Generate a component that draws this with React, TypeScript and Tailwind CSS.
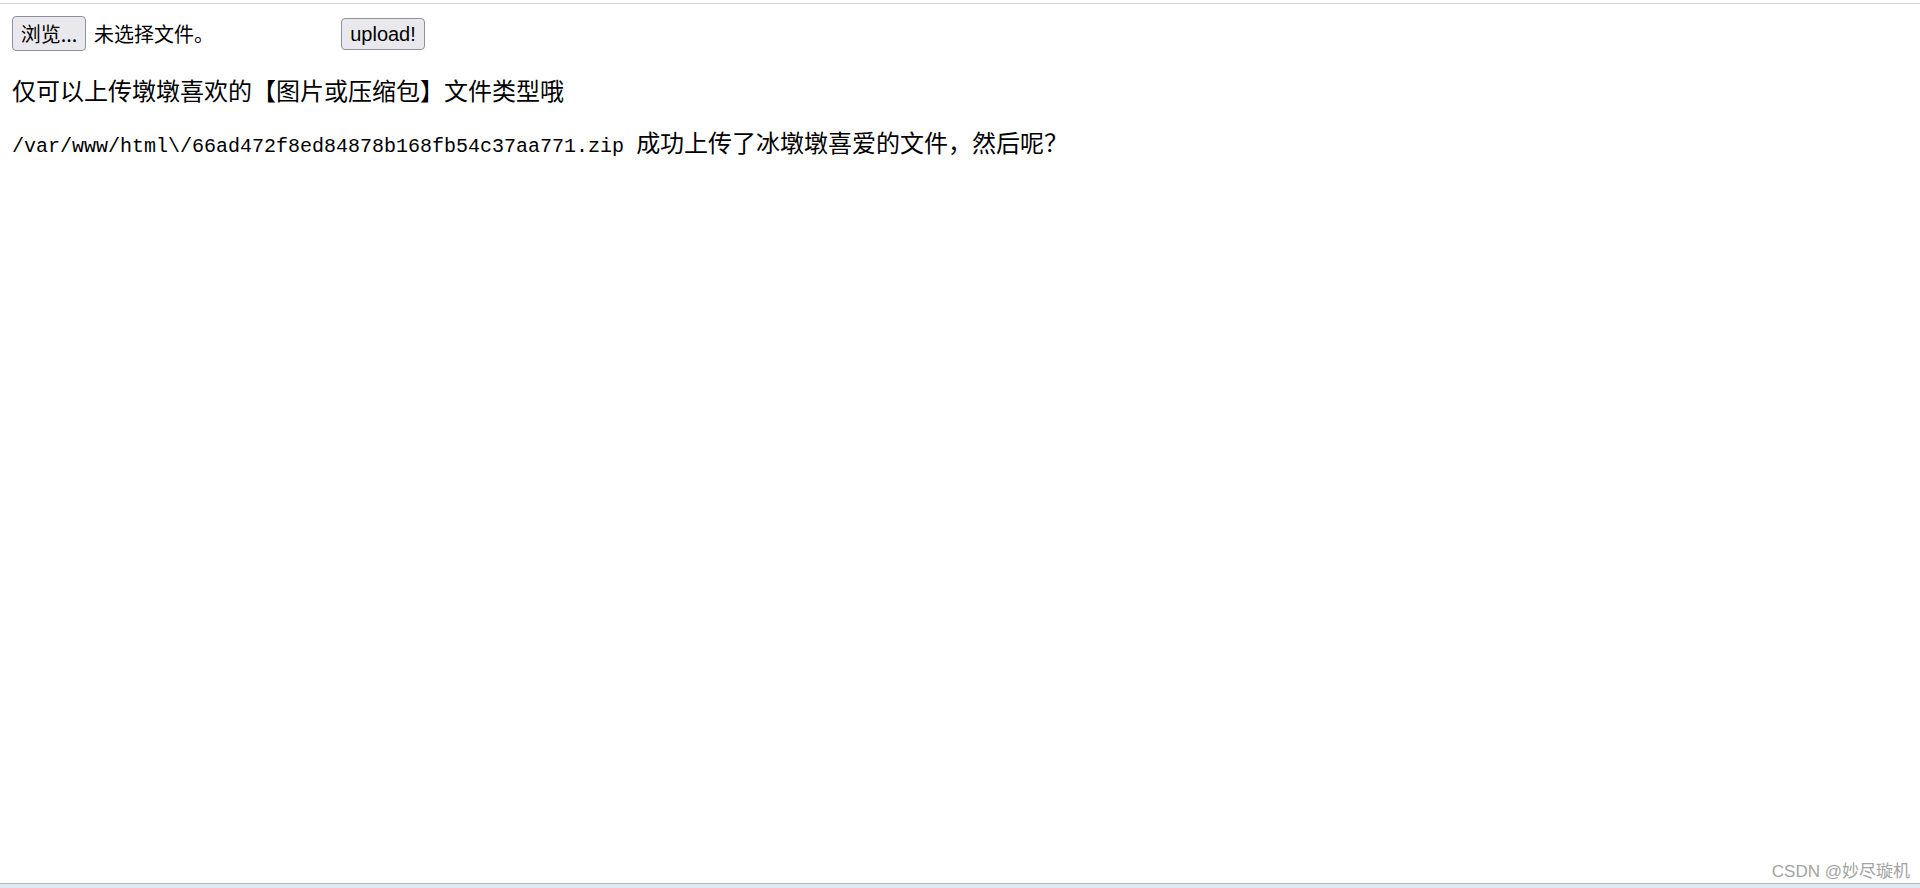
import React from 'react';

const App: React.FC = () => {
  const savedPath = '/var/www/html\\/66ad472f8ed84878b168fb54c37aa771.zip';

  return (
    <div className="h-[888px] w-full bg-white flex flex-col font-['Noto_Sans_CJK_SC',sans-serif] text-black overflow-hidden">
      {/* browser frame edge */}
      <div className="h-[3px] bg-white" />
      <div className="h-px bg-[#d6d6da]" />

      <div className="flex-1 px-[12px]">
        <form className="mt-[12px] h-[35px] flex items-center" onSubmit={(e) => e.preventDefault()}>
          <div className="flex items-center w-[329px]">
            <button
              type="button"
              className="h-[35px] w-[74px] bg-[#e9e9ed] border border-[#8f8f9d] rounded-[4px] text-[20px] leading-[20px] text-black"
            >
              浏览...
            </button>
            <span className="ml-[8px] text-[20px] leading-[20px]">未选择文件。</span>
          </div>
          <button
            type="submit"
            className="h-[32px] w-[84px] bg-[#e9e9ed] border border-[#8f8f9d] rounded-[4px] font-['Liberation_Sans',sans-serif] text-[20px] leading-[20px] text-black"
          >
            upload!
          </button>
        </form>

        <h4 className="mt-[27px] text-[24px] leading-[24px] font-normal">仅可以上传墩墩喜欢的【图片或压缩包】文件类型哦</h4>

        <p className="mt-[28px] text-[24px] leading-[24px]">
          <span className="font-['Liberation_Mono',monospace] text-[20px]">{savedPath} </span>
          成功上传了冰墩墩喜爱的文件，然后呢？
        </p>
      </div>

      <div className="flex justify-end pr-[10px] pb-[2px]">
        <span className="font-['Liberation_Sans','Noto_Sans_CJK_SC',sans-serif] text-[17px] leading-[18px] text-[#a3a3a3]">
          CSDN @妙尽璇机
        </span>
      </div>
      <div className="h-px bg-[#b9b9bd]" />
      <div className="h-[4px] bg-[#dfe8f6]" />
    </div>
  );
};

export default App;
